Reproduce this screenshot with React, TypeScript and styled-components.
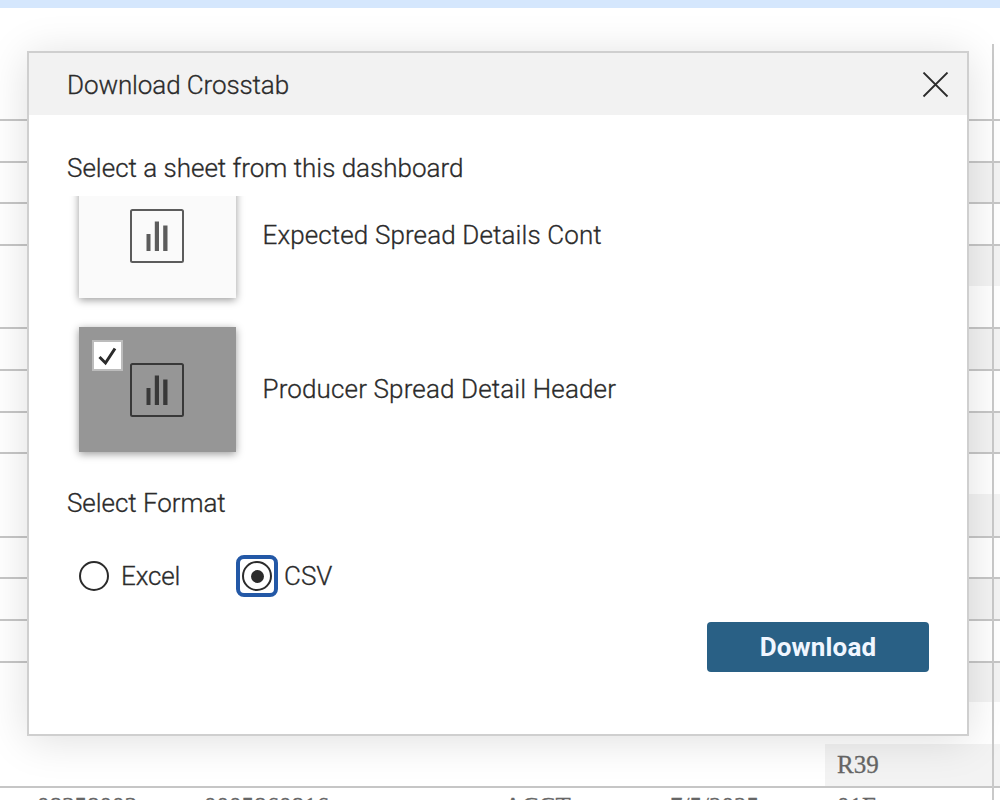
import React from "react";
import styled, { createGlobalStyle } from "styled-components";

const Global = createGlobalStyle`
  * { box-sizing: border-box; }
  body { margin: 0; background: #fff; overflow: hidden; }
`;

const Page = styled.div`
  position: relative;
  width: 1000px;
  height: 800px;
  overflow: hidden;
  background: #fff;
  display: flex;
  flex-direction: column;
`;

const TopBar = styled.div`
  height: 8px;
  margin-bottom: 36px;
  flex: none;
  background: #d5e7fd;
`;

const Row = styled.div<{ $height?: number }>`
  display: grid;
  grid-template-columns: 167px 302px 165px 191px 167px 2px 1fr;
  flex: none;
  height: ${(p) => p.$height ?? 41.67}px;
`;

const Cell = styled.div<{ $shaded?: boolean; $line?: boolean; $pad?: number }>`
  display: flex;
  align-items: center;
  padding: 0 0 1px ${(p) => p.$pad ?? 0}px;
  background: ${(p) => (p.$shaded ? "#f3f3f3" : "transparent")};
  border-top: 2px solid ${(p) => (p.$line ? "#c6c6c6" : "transparent")};
  font: 25px/30px "Liberation Serif", serif;
  color: #666;
  -webkit-text-stroke: 0.3px #666;
  white-space: nowrap;
`;

const Divider = styled.div`
  background: #c9c9c9;
`;

const Dialog = styled.section`
  position: absolute;
  left: 27px;
  top: 51px;
  width: 942px;
  height: 685px;
  border: 2px solid #cfcfcf;
  background: #fff;
  box-shadow: 0 4px 40px rgba(0, 0, 0, 0.13);
  color: #2b2b2b;
  font-family: Roboto, sans-serif;
  font-weight: 300;
  font-size: 26px;
  line-height: 32px;
`;

const Header = styled.header`
  height: 62px;
  padding: 1px 18px 0 38px;
  display: flex;
  align-items: center;
  justify-content: space-between;
  background: #f2f2f2;
`;

const Label = styled.span<{ $spacing?: number }>`
  display: block;
  white-space: nowrap;
  letter-spacing: ${(p) => p.$spacing ?? 0}px;
  -webkit-text-stroke: 0.3px currentColor;
`;

const CloseIcon = styled.svg`
  display: block;
  width: 27px;
  height: 26px;
`;

const Body = styled.div`
  padding: 37px 38px 0;
  display: flex;
  flex-direction: column;
`;

const SheetList = styled.div`
  height: 272px;
  margin: 12px 0 19px -10px;
  padding: 0 0 16px 22px;
  overflow: hidden;
  display: flex;
  flex-direction: column;
  justify-content: flex-end;
  gap: 29px;
`;

const Sheet = styled.div`
  display: flex;
  flex: none;
  align-items: center;
  gap: 27px;
`;

const SheetName = styled(Label)`
  padding-bottom: 2px;
`;

const Thumb = styled.div<{ $selected?: boolean }>`
  position: relative;
  width: 156.5px;
  height: 125px;
  padding: 0 1px 0 0;
  display: flex;
  align-items: center;
  justify-content: center;
  background: ${(p) => (p.$selected ? "#969696" : "#fafafa")};
  color: ${(p) => (p.$selected ? "#383838" : "#5c5c5c")};
  box-shadow: 0 2px 8px rgba(0, 0, 0, 0.4);
`;

const Check = styled.div`
  position: absolute;
  left: 13px;
  top: 13px;
  width: 31px;
  height: 31px;
  border: 2px solid #bcbcbc;
  background: #fff;
`;

const Formats = styled.div`
  display: flex;
  align-items: center;
  height: 42px;
  margin: 36px 0 0 6px;
`;

const Option = styled.label<{ $width: number; $gap: number }>`
  display: flex;
  align-items: center;
  width: ${(p) => p.$width}px;
  gap: ${(p) => p.$gap}px;
`;

const RadioFrame = styled.span<{ $focused?: boolean }>`
  display: flex;
  align-items: center;
  justify-content: center;
  width: 42px;
  height: 42px;
  border: 4px solid ${(p) => (p.$focused ? "#2358a6" : "transparent")};
  border-radius: 8px;
`;

const Radio = styled.span<{ $checked?: boolean }>`
  width: 30px;
  height: 30px;
  flex: none;
  border: 2px solid #2b2b2b;
  border-radius: 50%;
  display: flex;
  align-items: center;
  justify-content: center;
  &::after {
    content: "";
    width: 13px;
    height: 13px;
    border-radius: 50%;
    background: ${(p) => (p.$checked ? "#2b2b2b" : "transparent")};
  }
`;

const DownloadButton = styled.button`
  align-self: flex-end;
  width: 222px;
  height: 50px;
  margin-top: 25px;
  border: 0;
  border-radius: 4px;
  background: #296085;
  color: #f0f6ff;
  font: 700 26px/32px Roboto, sans-serif;
  letter-spacing: 0.15px;
  display: flex;
  align-items: center;
  justify-content: center;
`;

const SheetIcon = () => (
  <svg width="54" height="54" viewBox="0 0 54 54" fill="none">
    <rect x="1" y="1" width="52" height="52" rx="1.5" stroke="currentColor" strokeWidth="2" />
    <path d="M16.5 25h4v17h-4zM24.8 12.5h4.2v29.5h-4.2zM33.2 16.5h4.3v25.5h-4.3z" fill="currentColor" />
  </svg>
);

type RowData = { line?: boolean; shaded?: boolean; cells?: string[] };

// `line` is the rule along the top of the row.
const rows: RowData[] = [
  { line: true },
  { line: true, shaded: true },
  { line: true },
  { line: true, shaded: true },
  {},
  { line: true, shaded: true },
  { line: true },
  { line: true, shaded: true },
  { line: true },
  { shaded: true },
  { line: true },
  { line: true, shaded: true },
  { line: true },
  { line: true, shaded: true },
  {},
  { shaded: true, cells: ["", "", "", "", "R39"] },
  { line: true, cells: ["08358003", "0005860816", "ACCT", "7/5/2025", "01E"] },
];

const pads = [37, 37, 35, 36, 12];

export default function App() {
  return (
    <Page>
      <Global />
      <TopBar />
      <Row $height={75}>
        <Cell /><Cell /><Cell /><Cell /><Cell /><Divider /><Cell />
      </Row>
      {rows.map((r, i) => (
        <Row key={i}>
          {pads.map((pad, c) => (
            <Cell key={c} $pad={pad} $line={r.line} $shaded={r.shaded && c === 4}>
              {r.cells?.[c]}
            </Cell>
          ))}
          <Divider />
          <Cell $line={r.line} $shaded={r.shaded} />
        </Row>
      ))}
      <Dialog>
        <Header>
          <Label $spacing={-0.1}>Download Crosstab</Label>
          <CloseIcon viewBox="0 0 27 26">
            <path d="M1.5 0.5l24 24M25.5 0.5l-24 24" stroke="#2b2b2b" strokeWidth="1.8" />
          </CloseIcon>
        </Header>
        <Body>
          <Label>Select a sheet from this dashboard</Label>
          <SheetList>
            <Sheet>
              <Thumb><SheetIcon /></Thumb>
              <SheetName $spacing={0.12}>Expected Spread Details Cont</SheetName>
            </Sheet>
            <Sheet>
              <Thumb $selected>
                <Check>
                  <svg width="27" height="27" viewBox="0 0 27 27" fill="none">
                    <path d="M5.5 15L11.5 21L21 6.5" stroke="#2b2b2b" strokeWidth="3" />
                  </svg>
                </Check>
                <SheetIcon />
              </Thumb>
              <SheetName $spacing={0.14}>Producer Spread Detail Header</SheetName>
            </Sheet>
          </SheetList>
          <Label $spacing={-0.05}>Select Format</Label>
          <Formats>
            <Option $width={163} $gap={6}>
              <RadioFrame><Radio /></RadioFrame>
              <Label $spacing={-0.15}>Excel</Label>
            </Option>
            <Option $width={120} $gap={6}>
              <RadioFrame $focused><Radio $checked /></RadioFrame>
              <Label>CSV</Label>
            </Option>
          </Formats>
          <DownloadButton>Download</DownloadButton>
        </Body>
      </Dialog>
    </Page>
  );
}
